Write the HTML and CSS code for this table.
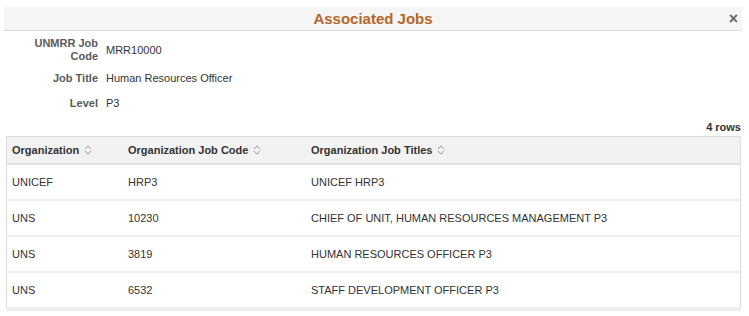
FILE: index.html
```html
<!DOCTYPE html>
<html>
<head>
<meta charset="utf-8">
<link rel="stylesheet" href="styles.css">
</head>
<body>
<div class="modal">
  <div class="modal-header">
    <h1 class="title">Associated Jobs</h1>
    <span class="close">&#215;</span>
  </div>
  <div class="fields">
    <div class="field field-first">
      <div class="label">UNMRR Job Code</div>
      <div class="value">MRR10000</div>
    </div>
    <div class="field field-second">
      <div class="label">Job Title</div>
      <div class="value">Human Resources Officer</div>
    </div>
    <div class="field field-third">
      <div class="label">Level</div>
      <div class="value">P3</div>
    </div>
  </div>
  <div class="rowcount">4 rows</div>
  <table class="grid">
    <thead>
      <tr>
        <th class="c1">Organization <svg class="sort" width="8" height="10" viewBox="0 0 8 10"><path d="M1 4 L4 1 L7 4 M1 6 L4 9 L7 6" fill="none" stroke="#9a9a9a" stroke-width="1"/></svg></th>
        <th class="c2">Organization Job Code <svg class="sort" width="8" height="10" viewBox="0 0 8 10"><path d="M1 4 L4 1 L7 4 M1 6 L4 9 L7 6" fill="none" stroke="#9a9a9a" stroke-width="1"/></svg></th>
        <th class="c3">Organization Job Titles <svg class="sort" width="8" height="10" viewBox="0 0 8 10"><path d="M1 4 L4 1 L7 4 M1 6 L4 9 L7 6" fill="none" stroke="#9a9a9a" stroke-width="1"/></svg></th>
      </tr>
    </thead>
    <tbody>
      <tr><td>UNICEF</td><td>HRP3</td><td>UNICEF HRP3</td></tr>
      <tr><td>UNS</td><td>10230</td><td>CHIEF OF UNIT, HUMAN RESOURCES MANAGEMENT P3</td></tr>
      <tr><td>UNS</td><td>3819</td><td>HUMAN RESOURCES OFFICER P3</td></tr>
      <tr><td>UNS</td><td>6532</td><td>STAFF DEVELOPMENT OFFICER P3</td></tr>
    </tbody>
  </table>
</div>
</body>
</html>
```

FILE: styles.css
```css
html, body {
  margin: 0;
  padding: 0;
  background: #ffffff;
}
body {
  font-family: "Liberation Sans", Arial, sans-serif;
  color: #333333;
  font-size: 11px;
}
.modal {
  padding: 7px 7px 0 4px;
}
.modal-header {
  position: relative;
  height: 23px;
  background: #f5f5f5;
  border-bottom: 1px solid #dcdcdc;
  display: flex;
  align-items: center;
  justify-content: center;
}
.title {
  margin: 0;
  font-size: 15px;
  font-weight: bold;
  color: #b6662a;
  line-height: 18px;
}
.close {
  position: absolute;
  right: 4px;
  top: 3px;
  font-size: 16px;
  font-weight: bold;
  color: #666666;
  line-height: 18px;
}
.fields {
  padding-top: 6px;
}
.field {
  display: flex;
  align-items: center;
}
.label {
  width: 94px;
  box-sizing: border-box;
  padding-left: 26px;
  text-align: right;
  font-weight: bold;
  color: #5a5a5a;
  line-height: 13px;
}
.value {
  margin-left: 8px;
  color: #333333;
  line-height: 13px;
}
.field-second {
  margin-top: 9px;
}
.field-third {
  margin-top: 12px;
}
.rowcount {
  margin-top: 11px;
  text-align: right;
  font-weight: bold;
  color: #333333;
  line-height: 13px;
  padding-right: 1px;
}
.grid {
  margin-top: 2px;
  margin-left: 2px;
  width: 735px;
  border-collapse: collapse;
  border: 1px solid #dddddd;
  border-bottom: 4px solid #eeeeee;
}
.grid th {
  background: #f2f2f2;
  text-align: left;
  font-weight: bold;
  color: #333333;
  height: 26px;
  padding: 0 0 0 5px;
  border-bottom: 2px solid #e2e2e2;
  font-size: 11px;
}
.grid td {
  height: 34px;
  padding: 0 0 0 5px;
  border-bottom: 2px solid #eeeeee;
  font-size: 11px;
}
.grid tbody tr:last-child td {
  border-bottom: none;
}
.c1 { width: 111px; }
.c2 { width: 178px; }
.sort {
  vertical-align: -1px;
  margin-left: 2px;
}
```
